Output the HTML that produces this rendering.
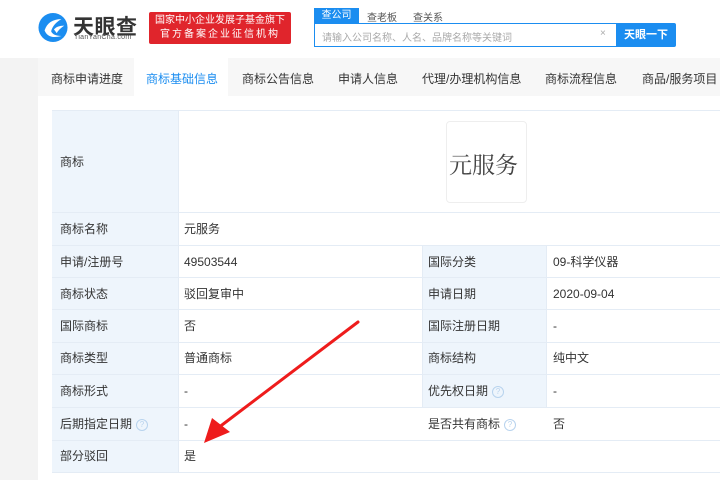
<!DOCTYPE html>
<html><head><meta charset="utf-8"><style>
*{margin:0;padding:0;box-sizing:border-box}
body{width:720px;height:480px;overflow:hidden;background:#f3f3f3;font-family:"Liberation Sans","Noto Sans CJK SC",sans-serif;position:relative;color:#333}
.hdr{position:absolute;left:0;top:0;width:720px;height:58px;background:#fff}
.nav{position:absolute;left:38px;top:58px;width:682px;height:38px;background:#f7f7f7;font-size:12px;color:#333}
.nav span{position:absolute;top:12px}
.main{position:absolute;left:38px;top:96px;width:682px;height:384px;background:#fff}
.c{position:absolute;font-size:12px;color:#333;line-height:14px}
.lb{position:absolute;background:#eef5fc}
.hl{position:absolute;height:1px;background:#e4ecf5}
.vl{position:absolute;width:1px;background:#e4ecf5}
.q{display:inline-block;width:12px;height:12px;border:1px solid #b8d3ee;border-radius:50%;font-size:8px;color:#b8d3ee;text-align:center;line-height:10px;margin-left:4px;vertical-align:1px}
</style></head><body>
<div class="hdr">
<svg style="position:absolute;left:38px;top:12px" width="30" height="31" viewBox="0 0 32 32"><circle cx="16" cy="16" r="15.5" fill="#1b8df0"/><path d="M7 19 Q11 7 25 7 Q16 12 14 20 Q16 25 25 25 Q11 29 7 19Z" fill="#fff"/><path d="M17 18 Q20 14 28 14 Q22 18 20 22Z" fill="#fff"/></svg>
<div style="position:absolute;left:73px;top:11px;font-size:21px;font-weight:bold;color:#333;letter-spacing:0.5px">天眼查</div>
<div style="position:absolute;left:74px;top:34px;font-size:7px;color:#555;letter-spacing:0.3px">TianYanCha.com</div>
<div style="position:absolute;left:149px;top:12px;width:142px;height:32px;background:#e0252c;color:#fff;font-size:10px;line-height:14px;text-align:center;padding-top:2px;border-radius:2px">国家中小企业发展子基金旗下<br><span style="letter-spacing:2px">官方备案企业征信机构</span></div>
<div style="position:absolute;left:314px;top:8px;width:45px;height:16px;background:#1b8df0;color:#fff;font-size:10px;text-align:center;line-height:16px">查公司</div>
<div style="position:absolute;left:367px;top:9px;font-size:10px;color:#555">查老板</div>
<div style="position:absolute;left:413px;top:9px;font-size:10px;color:#555">查关系</div>
<div style="position:absolute;left:314px;top:23px;width:303px;height:24px;border:1px solid #1b8df0;background:#fff"></div>
<div style="position:absolute;left:322px;top:29px;font-size:10px;color:#aaa">请输入公司名称、人名、品牌名称等关键词</div>
<div style="position:absolute;left:600px;top:28px;font-size:10px;color:#aaa">×</div>
<div style="position:absolute;left:616px;top:23px;width:60px;height:24px;background:#1b8df0;color:#fff;font-size:11px;font-weight:bold;text-align:center;line-height:24px;border-radius:0 2px 2px 0">天眼一下</div>
</div>
<div class="nav">
<div style="position:absolute;left:96px;top:0;width:94px;height:38px;background:#fff"></div>
<span style="left:13px">商标申请进度</span>
<span style="left:108px;color:#1b8df0">商标基础信息</span>
<span style="left:204px">商标公告信息</span>
<span style="left:300px">申请人信息</span>
<span style="left:384px">代理/办理机构信息</span>
<span style="left:507px">商标流程信息</span>
<span style="left:604px">商品/服务项目</span>
</div>
<div class="main"></div>
<div class="lb" style="left:52px;top:110px;width:126px;height:363px"></div>
<div class="lb" style="left:422px;top:245px;width:124px;height:162px"></div>
<div class="hl" style="left:52px;top:110px;width:668px"></div>
<div class="hl" style="left:52px;top:212px;width:668px"></div>
<div class="hl" style="left:52px;top:245px;width:668px"></div>
<div class="hl" style="left:52px;top:277px;width:668px"></div>
<div class="hl" style="left:52px;top:309px;width:668px"></div>
<div class="hl" style="left:52px;top:342px;width:668px"></div>
<div class="hl" style="left:52px;top:374px;width:668px"></div>
<div class="hl" style="left:52px;top:407px;width:668px"></div>
<div class="hl" style="left:52px;top:440px;width:668px"></div>
<div class="hl" style="left:52px;top:472px;width:668px"></div>
<div class="vl" style="left:178px;top:110px;height:363px"></div>
<div class="vl" style="left:422px;top:245px;height:162px"></div>
<div class="vl" style="left:546px;top:245px;height:162px"></div>
<div style="position:absolute;left:446px;top:121px;width:81px;height:82px;border:1px solid #eee;border-radius:4px;background:#fff"></div>
<div style="position:absolute;left:449px;top:147px;font-family:'Noto Serif CJK SC',serif;font-size:23px;color:#444">元服务</div>
<div class="c" style="left:60px;top:155px">商标</div>
<div class="c" style="left:60px;top:222px">商标名称</div><div class="c" style="left:184px;top:222px">元服务</div>
<div class="c" style="left:60px;top:255px">申请/注册号</div><div class="c" style="left:184px;top:255px">49503544</div>
<div class="c" style="left:428px;top:255px">国际分类</div><div class="c" style="left:553px;top:255px">09-科学仪器</div>
<div class="c" style="left:60px;top:287px">商标状态</div><div class="c" style="left:184px;top:287px">驳回复审中</div>
<div class="c" style="left:428px;top:287px">申请日期</div><div class="c" style="left:553px;top:287px">2020-09-04</div>
<div class="c" style="left:60px;top:319px">国际商标</div><div class="c" style="left:184px;top:319px">否</div>
<div class="c" style="left:428px;top:319px">国际注册日期</div><div class="c" style="left:553px;top:319px">-</div>
<div class="c" style="left:60px;top:351px">商标类型</div><div class="c" style="left:184px;top:351px">普通商标</div>
<div class="c" style="left:428px;top:351px">商标结构</div><div class="c" style="left:553px;top:351px">纯中文</div>
<div class="c" style="left:60px;top:384px">商标形式</div><div class="c" style="left:184px;top:384px">-</div>
<div class="c" style="left:428px;top:384px">优先权日期<span class="q">?</span></div><div class="c" style="left:553px;top:384px">-</div>
<div class="c" style="left:60px;top:417px">后期指定日期<span class="q">?</span></div><div class="c" style="left:184px;top:417px">-</div>
<div class="c" style="left:428px;top:417px">是否共有商标<span class="q">?</span></div><div class="c" style="left:553px;top:417px">否</div>
<div class="c" style="left:60px;top:449px">部分驳回</div><div class="c" style="left:184px;top:449px">是</div>
<svg style="position:absolute;left:0;top:0" width="720" height="480"><path d="M358 322 L218 428" stroke="#ee1c1c" stroke-width="3" stroke-linecap="round"/><path d="M204 443 L212 418 L230 432 Z" fill="#ee1c1c"/></svg>
</body></html>
